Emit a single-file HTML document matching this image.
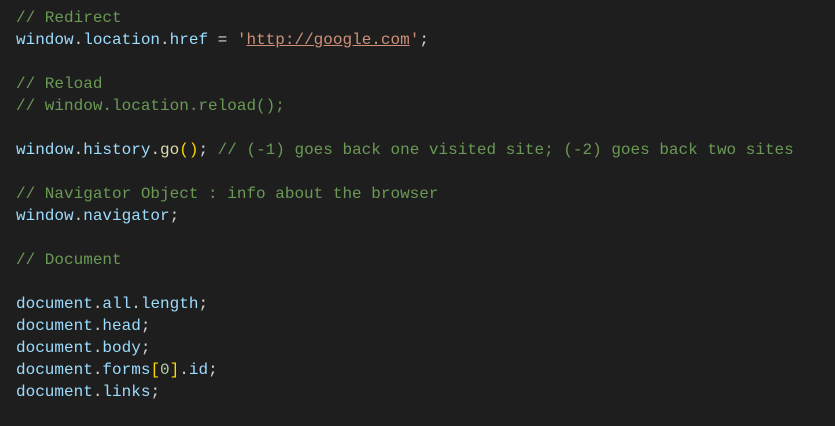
<html><head><style>
body{margin:0;background:#1e1e1e;width:835px;height:426px;overflow:hidden}
pre{margin:0;position:absolute;left:16px;top:7px;font:16px/22px "Liberation Mono",monospace;color:#d4d4d4}
.c{color:#6a9955}.v{color:#9cdcfe}.f{color:#dcdcaa}.s{color:#ce9178}.u{color:#ce9178;text-decoration:underline}.y{color:#ffd700}.n{color:#b5cea8}
</style></head><body><pre><span class="c">// Redirect</span>
<span class="v">window</span>.<span class="v">location</span>.<span class="v">href</span> = <span class="s">'</span><span class="u">http://google.com</span><span class="s">'</span>;

<span class="c">// Reload</span>
<span class="c">// window.location.reload();</span>

<span class="v">window</span>.<span class="v">history</span>.<span class="f">go</span><span class="y">()</span>; <span class="c">// (-1) goes back one visited site; (-2) goes back two sites</span>

<span class="c">// Navigator Object : info about the browser</span>
<span class="v">window</span>.<span class="v">navigator</span>;

<span class="c">// Document</span>

<span class="v">document</span>.<span class="v">all</span>.<span class="v">length</span>;
<span class="v">document</span>.<span class="v">head</span>;
<span class="v">document</span>.<span class="v">body</span>;
<span class="v">document</span>.<span class="v">forms</span><span class="y">[</span><span class="n">0</span><span class="y">]</span>.<span class="v">id</span>;
<span class="v">document</span>.<span class="v">links</span>;</pre></body></html>
